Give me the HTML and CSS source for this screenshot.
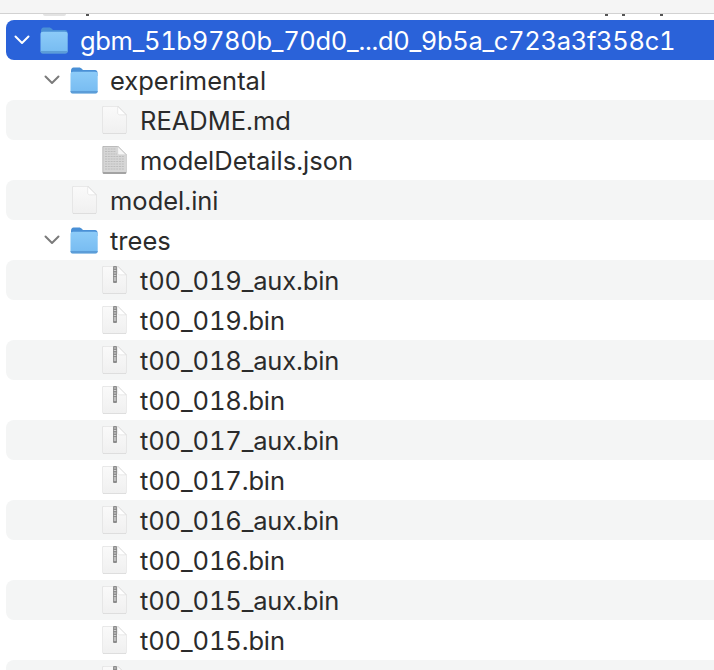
FILE: index.html
```html
<!DOCTYPE html>
<html lang="en">
<head>
<meta charset="utf-8">
<title>Finder</title>
<link rel="stylesheet" href="styles.css">
</head>
<body>
<svg class="defs" width="0" height="0" aria-hidden="true">
  <defs>
    <linearGradient id="fbody" x1="0" y1="0" x2="0" y2="1"><stop offset="0" stop-color="#8ccbf8"/><stop offset="1" stop-color="#76bbf1"/></linearGradient>
    <linearGradient id="fpage" x1="0" y1="0" x2="0" y2="1"><stop offset="0" stop-color="#fafafa"/><stop offset="1" stop-color="#f0f0f0"/></linearGradient>
    <symbol id="folder" viewBox="0 0 28 27">
      <path d="M1 4C1 2 2 .5 3.500 .5H9c1.300 0 2 .5 3 1.500L13 3H25c1.500 0 2.500 1 2.500 2.500V9H1z" fill="#4a90d6"/>
      <path d="M.5 7C.5 5.500 1.500 4.800 3 4.800H25c1.700 0 2.700.7 2.700 2.200V23.500c0 1.800-1 2.800-2.700 2.800H3c-1.600 0-2.500-1-2.500-2.800z" fill="url(#fbody)"/>
      <path d="M.5 24h27.200v.2c0 1.500-1 2.300-2.700 2.300H3c-1.600 0-2.500-.8-2.500-2.300z" fill="#5c9dd8"/>
    </symbol>
    <symbol id="page" viewBox="0 0 25 28">
      <path d="M1.500 0H16L24.500 8.500V26.500c0 .8-.6 1.500-1.500 1.500H2c-.9 0-1.500-.7-1.500-1.500V1C.5.400 1 0 1.500 0z" fill="#d8d8d8"/>
      <path d="M1.500.5H15.700L24 8.800V26c0 .8-.5 1.300-1.300 1.300H2.300C1.500 27.300 1 26.800 1 26V1C1 .7 1.200.5 1.500.5z" fill="url(#fpage)"/>
      <path d="M15.700.5V7c0 1 .8 1.800 1.800 1.800H24z" fill="#fff" stroke="#dedede" stroke-width=".6"/>
    </symbol>
    <symbol id="zip" viewBox="0 0 25 28">
      <use href="#page"/>
      <rect x="11" y="0" width="4" height="17" rx="1" fill="#8c8c8c"/>
      <path d="M11.800 2h2.400M11.800 4.500h2.400M11.800 7h2.400M11.800 9.500h2.400" stroke="#cfcfcf" stroke-width="1"/>
      <rect x="11.800" y="11" width="2.400" height="4" fill="#bdbdbd"/>
    </symbol>
    <symbol id="doc" viewBox="0 0 25 28">
      <path d="M1.500 0H16L24.500 8.500V26.500c0 .8-.6 1.500-1.500 1.500H2c-.9 0-1.500-.7-1.500-1.500V1C.5.400 1 0 1.500 0z" fill="#a3a3a3"/>
      <path d="M1.200.6H15.700L24 8.800V26H1.200z" fill="#d6d6d6"/>
      <path d="M3 3H14M3 5.500H14M3 8H15M3 10.500H22M3 13H22M3 15.500H22M3 18H22M3 20.500H22M3 23H22" stroke="#bdbdbd" stroke-width="1.100" stroke-dasharray="2 .8"/>
      <path d="M15.700.5V7c0 1 .8 1.800 1.800 1.800H24z" fill="#f6f6f6" stroke="#cfcfcf" stroke-width=".6"/>
    </symbol>
    <symbol id="chev" viewBox="0 0 16 10">
      <path d="M1.500 1.500 8 8l6.500-6.500" fill="none" stroke="currentColor" stroke-width="2" stroke-linecap="round" stroke-linejoin="round"/>
    </symbol>
  </defs>
</svg>
<div class="toolbar"></div>
<div class="clip">
  <span class="clip-icon"></span>
  <span class="clip-dot clip-g"></span>
  <span class="clip-dot clip-r1"></span>
  <span class="clip-dot clip-r2"></span>
  <span class="clip-dot clip-r3"></span>
</div>
<ul class="tree">
  <li class="row selected l0"><svg class="chev"><use href="#chev"/></svg><svg class="folder"><use href="#folder"/></svg><span class="name hash">gbm_51b9780b_70d0_...d0_9b5a_c723a3f358c1</span></li>
  <li class="row l1"><svg class="chev"><use href="#chev"/></svg><svg class="folder"><use href="#folder"/></svg><span class="name">experimental</span></li>
  <li class="row alt l2"><svg class="file"><use href="#page"/></svg><span class="name">README.md</span></li>
  <li class="row l2"><svg class="file"><use href="#doc"/></svg><span class="name">modelDetails.json</span></li>
  <li class="row alt l1f"><svg class="file"><use href="#page"/></svg><span class="name">model.ini</span></li>
  <li class="row l1"><svg class="chev"><use href="#chev"/></svg><svg class="folder"><use href="#folder"/></svg><span class="name">trees</span></li>
  <li class="row alt l2"><svg class="file"><use href="#zip"/></svg><span class="name bin">t00_019_aux.bin</span></li>
  <li class="row l2"><svg class="file"><use href="#zip"/></svg><span class="name bin">t00_019.bin</span></li>
  <li class="row alt l2"><svg class="file"><use href="#zip"/></svg><span class="name bin">t00_018_aux.bin</span></li>
  <li class="row l2"><svg class="file"><use href="#zip"/></svg><span class="name bin">t00_018.bin</span></li>
  <li class="row alt l2"><svg class="file"><use href="#zip"/></svg><span class="name bin">t00_017_aux.bin</span></li>
  <li class="row l2"><svg class="file"><use href="#zip"/></svg><span class="name bin">t00_017.bin</span></li>
  <li class="row alt l2"><svg class="file"><use href="#zip"/></svg><span class="name bin">t00_016_aux.bin</span></li>
  <li class="row l2"><svg class="file"><use href="#zip"/></svg><span class="name bin">t00_016.bin</span></li>
  <li class="row alt l2"><svg class="file"><use href="#zip"/></svg><span class="name bin">t00_015_aux.bin</span></li>
  <li class="row l2"><svg class="file"><use href="#zip"/></svg><span class="name bin">t00_015.bin</span></li>
  <li class="row alt l2"><svg class="file"><use href="#zip"/></svg><span class="name"></span></li>
</ul>
</body>
</html>
```
FILE: styles.css
```css
* { box-sizing: border-box; }
html, body { margin: 0; padding: 0; height: 670px; overflow: hidden; background: #fff; }
body { font-family: "Inter", "Liberation Sans", sans-serif; color: #2b2b2b; }
.defs { position: absolute; }
.toolbar { height: 14px; background: #f5f5f5; border-bottom: 1px solid #d2d2d2; }
.clip { height: 6px; position: relative; overflow: hidden; }
.clip-icon { position: absolute; left: 43px; top: 0; width: 23px; height: 2px; background: #e3e3e3; border-radius: 0 0 3px 3px; }
.clip-dot { position: absolute; top: 0; width: 3px; height: 2px; background: #555; }
.clip-g { left: 86px; }
.clip-r1 { left: 605px; }
.clip-r2 { left: 622px; }
.clip-r3 { left: 660px; }
.tree { list-style: none; margin: 0; padding: 0; }
.row { display: flex; align-items: center; height: 40px; margin-left: 6px; border-radius: 8px 0 0 8px; font-size: 25.5px; font-variant-numeric: tabular-nums; white-space: nowrap; }
.alt { background: #f4f5f5; }
.selected { background: #2a62d9; color: #fff; }
.l0 { padding-left: 6px; }
.l1 { padding-left: 36px; }
.l1f { padding-left: 66px; }
.l2 { padding-left: 96px; }
.chev { width: 16px; height: 10px; margin: 0 10px 0 2px; color: #7b7b7b; flex: none; }
.selected .chev { color: #fff; }
.folder { width: 28px; height: 27px; flex: none; }
.file { width: 25px; height: 28px; flex: none; }
.name { margin-left: 12px; }
.file + .name { margin-left: 13px; }
.hash { letter-spacing: -0.32px; }
.bin { letter-spacing: -0.14px; }
```
